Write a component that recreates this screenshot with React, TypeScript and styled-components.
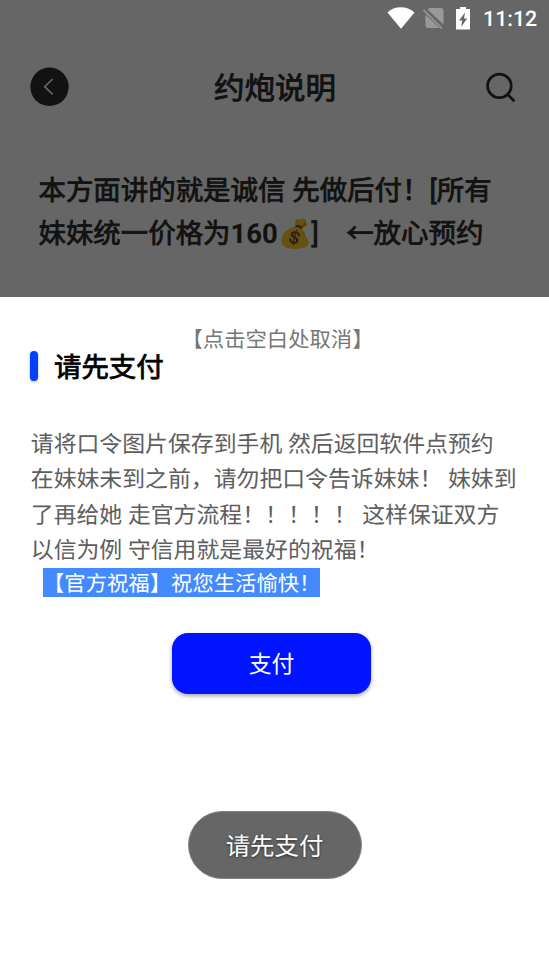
import React from "react";
import styled, { createGlobalStyle } from "styled-components";

const GlobalStyle = createGlobalStyle`
  * { box-sizing: border-box; }
  body {
    margin: 0;
    background: #fff;
    font-family: Roboto, "Noto Sans CJK SC", "Noto Color Emoji", sans-serif;
    text-rendering: geometricPrecision;
    font-kerning: none;
    text-spacing-trim: space-all;
  }
`;

const Screen = styled.div`
  position: relative;
  width: 549px;
  height: 976px;
  overflow: hidden;
  display: flex;
  flex-direction: column;
  background: #fff;
`;

const Backdrop = styled.div`
  height: 297px;
  flex: none;
  padding-top: 38px;
  color: #2d2d2d;
`;

const Scrim = styled.div`
  position: absolute;
  inset: 0 0 auto;
  height: 297px;
  background: rgba(0, 0, 0, 0.6);
`;

const StatusBar = styled.div`
  display: flex;
  align-items: center;
  justify-content: flex-end;
  height: 38px;
  padding-right: 11px;
  color: #fff;
`;

const StatusIcons = styled.svg`
  display: block;
  width: 90px;
  height: 38px;
  margin-right: 7px;
`;

const Clock = styled.span`
  width: 55px;
  padding-top: 1px;
  font-size: 21.4px;
  font-weight: 500;
  line-height: 38px;
  white-space: nowrap;
`;

const AppBar = styled.header`
  display: flex;
  align-items: center;
  justify-content: space-between;
  height: 97px;
  padding: 0 32px 0 30px;
`;

const BarIcon = styled.svg<{ $size: number }>`
  display: block;
  width: ${(p) => p.$size}px;
  height: ${(p) => p.$size}px;
`;

const Title = styled.h1`
  margin: 0 0 0 -4px;
  padding-top: 6px;
  font-size: 30.5px;
  font-weight: 400;
  line-height: 40px;
  -webkit-text-stroke: 0.9px currentColor;
`;

const Notice = styled.div`
  margin: 35px 0 0 38.5px;
  font-size: 27.45px;
  line-height: 43px;
  -webkit-text-stroke: 0.8px currentColor;
`;

const Line = styled.div`
  white-space: pre;
`;

const Digits = styled.span`
  font-weight: 700;
  -webkit-text-stroke: 0;
`;

const Emoji = styled.span`
  margin: 0 -1px 0 0.5px;
`;

const Sheet = styled.section`
  flex: 1;
  display: flex;
  flex-direction: column;
  align-items: flex-start;
`;

const CancelHint = styled.div`
  align-self: center;
  margin-top: 28px;
  padding-left: 6px;
  font-size: 21.35px;
  line-height: 32px;
  color: #777;
`;

const Heading = styled.div`
  display: flex;
  align-items: center;
  gap: 16px;
  height: 30px;
  margin: -6px 0 0 30px;
`;

const Accent = styled.span`
  width: 8px;
  height: 30px;
  border-radius: 4px;
  background: #0040ff;
  box-shadow: 0 1px 3px rgba(0, 0, 0, 0.3);
`;

const HeadingText = styled.h2`
  margin: 0;
  padding-top: 4px;
  font-size: 27.45px;
  font-weight: 400;
  line-height: 30px;
  color: #000;
  -webkit-text-stroke: 0.8px currentColor;
`;

const Body = styled.div`
  margin: 46px 0 0 30.8px;
  font-size: 22.87px;
  line-height: 35.4px;
  color: #5e5e5e;
`;

const Blessing = styled.div`
  height: 29px;
  margin: -1px 0 0 43px;
  padding-top: 2px;
  background: #448aff;
  color: #fff;
  font-size: 21.35px;
  line-height: 29px;
  white-space: nowrap;
`;

const PayButton = styled.button`
  width: 199px;
  height: 61px;
  margin: 36px 0 0 172px;
  padding: 1px 0 0;
  border: 0;
  border-radius: 16px;
  background: #0014ff;
  box-shadow: 0 2px 4px rgba(0, 0, 0, 0.35);
  color: #fff;
  font: inherit;
  font-size: 22.87px;
  line-height: 61px;
`;

const Toast = styled.div`
  align-self: center;
  width: 174px;
  height: 68px;
  margin-top: 117px;
  border: 1px solid #858585;
  border-radius: 34px;
  background: #666;
  color: #fff;
  font-size: 24.4px;
  line-height: 69px;
  text-align: center;
  text-shadow: 0 1px 3px rgba(0, 0, 0, 0.6);
`;

const bodyLines = [
  "请将口令图片保存到手机 然后返回软件点预约",
  "在妹妹未到之前，请勿把口令告诉妹妹！ 妹妹到",
  "了再给她 走官方流程！！！！！ 这样保证双方",
  "以信为例 守信用就是最好的祝福！",
];

export default function App() {
  return (
    <>
      <GlobalStyle />
      <Screen>
        <Backdrop>
          <AppBar>
            <BarIcon $size={39} viewBox="0 0 39 39">
              <circle cx="19.5" cy="19.8" r="19.2" fill="#2d2d2d" />
              <path d="M22.7 12 14.7 19.7 22.7 27.3" fill="none" stroke="#fff" strokeWidth="1.6" />
            </BarIcon>
            <Title>约炮说明</Title>
            <BarIcon $size={32} viewBox="0 0 32 32" fill="none" stroke="#2d2d2d" strokeWidth="2.7">
              <circle cx="14.4" cy="14.9" r="11.8" />
              <path d="m22.4 23.3 7 7" />
            </BarIcon>
          </AppBar>
          <Notice>
            <Line>本方面讲的就是诚信 先做后付！[所有</Line>
            <Line>
              妹妹统一价格为<Digits>160</Digits>
              <Emoji>💰</Emoji>]　←放心预约
            </Line>
          </Notice>
        </Backdrop>
        <Scrim>
          <StatusBar>
            <StatusIcons viewBox="0 0 90 38">
              <path d="M1.5 12.5C8 5.5 21 5.5 28.5 12.5L15 28.8Z" fill="#fff" />
              <path d="M43.5 8H55Q57.5 8 57.5 10.5V24.5L41.5 9.5ZM39.5 14.5 53.5 28H42Q39.5 28 39.5 25.5Z" fill="#999" />
              <path d="m37.5 10 18.5 18.5" stroke="#999" strokeWidth="1.7" />
              <path
                fillRule="evenodd"
                d="M74 7h6v2h4v20.5H70V9h4ZM79 12.5l-6 8h3.2l-1 6.2 6-8.2H78Z"
                fill="#fff"
              />
            </StatusIcons>
            <Clock>11:12</Clock>
          </StatusBar>
        </Scrim>
        <Sheet>
          <CancelHint>【点击空白处取消】</CancelHint>
          <Heading>
            <Accent />
            <HeadingText>请先支付</HeadingText>
          </Heading>
          <Body>
            {bodyLines.map((line) => (
              <Line key={line}>{line}</Line>
            ))}
          </Body>
          <Blessing>【官方祝福】祝您生活愉快！</Blessing>
          <PayButton>支付</PayButton>
          <Toast>请先支付</Toast>
        </Sheet>
      </Screen>
    </>
  );
}
